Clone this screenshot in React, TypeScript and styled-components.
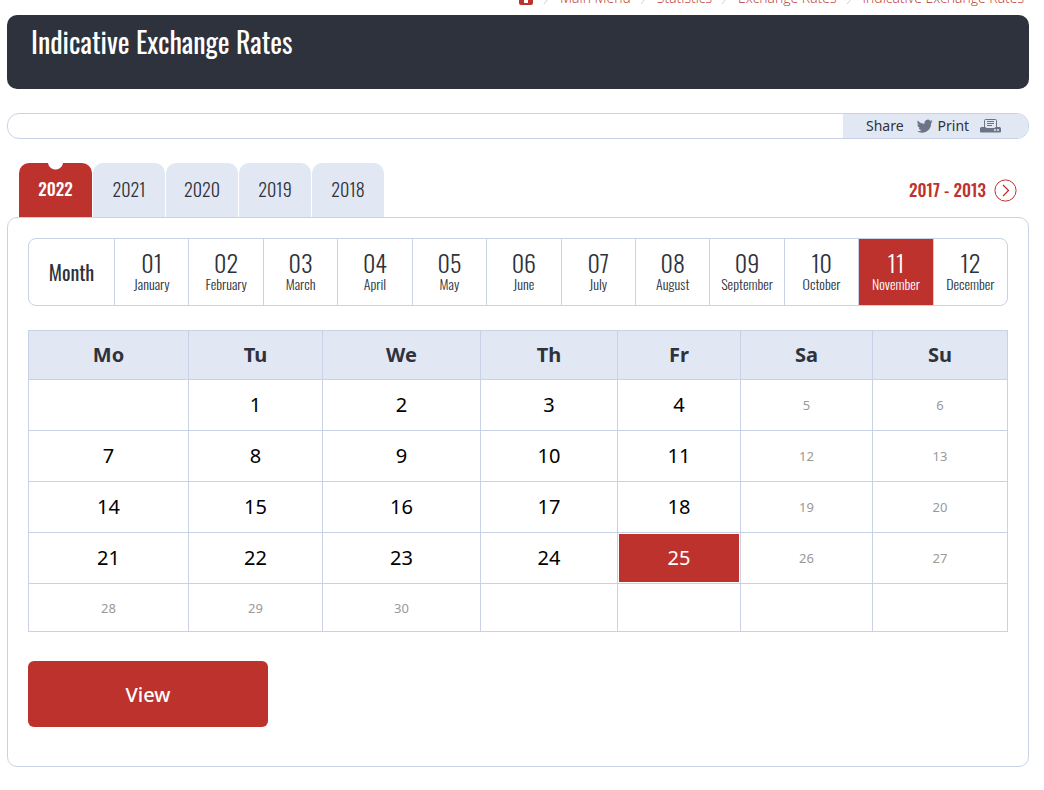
import React, { useState } from "react";
import styled, { createGlobalStyle, css } from "styled-components";

const red = "#be322e";
const ink = "#2e323c";
const line = "#c9d1e4";
const pale = "#e2e8f3";
const body = `"Noto Sans", "Open Sans", sans-serif`;
const light = `"Open Sans", "Noto Sans", sans-serif`;
const narrow = `Oswald, "Liberation Sans Narrow", "Arial Narrow", "Liberation Sans", sans-serif`;

const GlobalStyle = createGlobalStyle`
  *, *::before, *::after { box-sizing: border-box; }
  body { margin: 0; background: #fff; color: ${ink}; font-family: ${body}; }
  button { margin: 0; padding: 0; border: 0; background: none; color: inherit; font: inherit; cursor: pointer; }
  a { text-decoration: none; color: inherit; }
`;

const Page = styled.main`
  padding: 0 15px 20px 7px;
`;

const Breadcrumbs = styled.nav`
  display: flex;
  justify-content: flex-end;
  align-items: flex-end;
  gap: 9px;
  height: 15px;
  padding: 0 5px 7px 0;
  overflow: hidden;
  color: ${red};
  font-family: ${light};
  font-size: 14px;
  font-weight: 300;
  line-height: 20px;
  white-space: nowrap;
`;

const HomeLink = styled.a`
  display: flex;
  padding-bottom: 3px;
`;

const Divider = styled.span`
  display: flex;
  padding-bottom: 4px;
`;

const Banner = styled.header`
  height: 74px;
  padding: 9px 24px;
  border-radius: 10px;
  background: ${ink};
`;

const Title = styled.h1`
  margin: 0;
  color: #fff;
  font: 400 28px/36px ${narrow};
`;

const ShareBar = styled.div`
  display: flex;
  justify-content: flex-end;
  height: 26px;
  margin-top: 24px;
  border: 1px solid ${line};
  border-radius: 12px;
  overflow: hidden;
`;

const ShareActions = styled.div`
  display: flex;
  align-items: center;
  width: 185px;
  padding-left: 23px;
  background: ${pale};
  font-size: 14px;
  line-height: 24px;
`;

const IconLink = styled.a`
  display: flex;
  margin: 0 5px 0 13px;
`;

const PrintButton = styled.button`
  display: flex;
  align-items: center;
  gap: 11px;
`;

const YearBar = styled.div`
  display: flex;
  justify-content: space-between;
  align-items: center;
  height: 54px;
  margin-top: 24px;
  padding: 0 12px;
`;

const Tabs = styled.div`
  display: flex;
  gap: 1px;
`;

const YearTab = styled.button<{ $active: boolean }>`
  width: 72px;
  height: 54px;
  padding-bottom: 2px;
  border-radius: 10px 10px 0 0;
  background: ${pale};
  color: ${ink};
  font: 300 18px/24px ${narrow};
  ${(p) =>
    p.$active &&
    css`
      width: 73px;
      background: radial-gradient(circle at 50% -1px, #fff 7px, ${red} 8px);
      color: #fff;
      font-size: 17px;
      font-weight: 500;
    `}
`;

const OlderYears = styled.a`
  display: flex;
  align-items: center;
  gap: 8px;
  color: ${red};
  font: 500 17px/24px ${narrow};
`;

const Panel = styled.section`
  padding: 20px 20px 39px;
  border: 1px solid ${line};
  border-radius: 10px;
`;

const Months = styled.div`
  display: flex;
  height: 68px;
  border: 1px solid ${line};
  border-radius: 8px;
  overflow: hidden;
`;

const MonthLabel = styled.div`
  width: 85px;
  font: 400 20px/66px ${narrow};
  text-align: center;
`;

const MonthButton = styled.button<{ $active: boolean }>`
  display: flex;
  flex: 1 1 0;
  flex-direction: column;
  align-items: center;
  min-width: 0;
  padding-top: 9px;
  border-left: 1px solid ${line};
  background: ${(p) => (p.$active ? red : "transparent")};
  color: ${(p) => (p.$active ? "#fff" : ink)};
  font-family: ${narrow};
  font-weight: 300;
`;

const MonthNumber = styled.span`
  font-size: 24px;
  line-height: 28px;
`;

const MonthName = styled.span`
  font-size: 14px;
  line-height: 16px;
`;

const Calendar = styled.table`
  width: 100%;
  margin-top: 24px;
  border-collapse: collapse;
  table-layout: fixed;
`;

const DayHead = styled.th`
  height: 49px;
  padding: 0;
  border: 1px solid ${line};
  background: ${pale};
  font-size: 20px;
  font-weight: 700;
  line-height: 28px;
`;

const DayCell = styled.td`
  height: 48px;
  padding: 1px;
  border: 1px solid ${line};
  color: #999;
  font-size: 13px;
  line-height: 18px;
  text-align: center;
`;

const DayButton = styled.button<{ $active: boolean }>`
  display: block;
  width: 100%;
  height: 48px;
  background: ${(p) => (p.$active ? red : "transparent")};
  color: ${(p) => (p.$active ? "#fff" : "#000")};
  font-size: 20px;
  line-height: 48px;
`;

const ViewButton = styled.button`
  display: block;
  width: 240px;
  height: 66px;
  margin-top: 29px;
  border-radius: 6px;
  background: ${red};
  color: #fff;
  font-size: 20px;
  font-weight: 500;
  line-height: 68px;
`;

const HomeIcon = () => (
  <svg width="16" height="16" viewBox="0 0 16 16" fill={red} aria-hidden="true">
    <path d="M8 0 0 7h1v7a2 2 0 0 0 2 2h10a2 2 0 0 0 2-2V7h1z" />
    <path d="M6 11h4v3H6z" fill="#fff" />
  </svg>
);

const Chevron = () => (
  <svg width="8" height="12" viewBox="0 0 8 12" fill="none" stroke={line} aria-hidden="true">
    <path d="M1 1l5 5-5 6" />
  </svg>
);

const BirdIcon = () => (
  <svg width="16" height="16" viewBox="0 0 24 24" fill="#6c7588" aria-hidden="true">
    <path d="M23.6 4.9a9.7 9.7 0 0 1-2.8.8 4.9 4.9 0 0 0 2.1-2.7 9.7 9.7 0 0 1-3.1 1.2 4.9 4.9 0 0 0-8.4 4.5A13.9 13.9 0 0 1 1.3 3.6a4.9 4.9 0 0 0 1.5 6.5 4.9 4.9 0 0 1-2.2-.6 4.9 4.9 0 0 0 3.9 4.9 4.9 4.9 0 0 1-2.2.1 4.9 4.9 0 0 0 4.6 3.4A9.9 9.9 0 0 1 0 19.9a13.9 13.9 0 0 0 21.2-12.4 10 10 0 0 0 2.4-2.6z" />
  </svg>
);

const PrinterIcon = () => (
  <svg width="21" height="14" viewBox="0 0 21 14" aria-hidden="true">
    <path d="M4.5 8V1.5a1 1 0 0 1 1-1h10a1 1 0 0 1 1 1V8" fill="none" stroke="#6c7588" />
    <path d="M7 2.500h7M7 4.500h7M7 6.500h5" stroke="#6c7588" fill="none" />
    <path d="M1.5 8h4l1 1h8l1-1h4A1.5 1.5 0 0 1 21 9.500v3a1 1 0 0 1-1 1H1a1 1 0 0 1-1-1v-3A1.5 1.5 0 0 1 1.5 8z" fill="#6c7588" />
    <circle cx="15" cy="11" r="1" fill={pale} />
    <circle cx="18" cy="11" r="1" fill={pale} />
  </svg>
);

const CircleArrow = () => (
  <svg width="23" height="23" viewBox="0 0 23 23" fill="none" stroke={red} aria-hidden="true">
    <circle cx="11.5" cy="11.5" r="10.6" />
    <path d="m9 6 5.5 5.500L9 17" strokeWidth="1.3" />
  </svg>
);

const crumbs = ["Main Menu", "Statistics", "Exchange Rates", "Indicative Exchange Rates"];
const years = [2022, 2021, 2020, 2019, 2018];
const months = [
  "January", "February", "March", "April", "May", "June",
  "July", "August", "September", "October", "November", "December",
];
const weekdays = [
  { name: "Mo", width: 160 },
  { name: "Tu", width: 134 },
  { name: "We", width: 158 },
  { name: "Th", width: 137 },
  { name: "Fr", width: 123 },
  { name: "Sa", width: 132 },
  { name: "Su", width: 135 },
];
const weeks = [0, 1, 2, 3, 4].map((w) =>
  weekdays.map((_, d) => {
    const n = w * 7 + d;
    return n >= 1 && n <= 30 ? n : null;
  })
);

export default function App() {
  const [year, setYear] = useState(2022);
  const [month, setMonth] = useState(10);
  const [day, setDay] = useState(25);

  return (
    <>
      <GlobalStyle />
      <Page>
        <Breadcrumbs aria-label="Breadcrumb">
          <HomeLink href="#" aria-label="Home">
            <HomeIcon />
          </HomeLink>
          {crumbs.map((c) => (
            <React.Fragment key={c}>
              <Divider>
                <Chevron />
              </Divider>
              <a href="#">{c}</a>
            </React.Fragment>
          ))}
        </Breadcrumbs>
        <Banner>
          <Title>Indicative Exchange Rates</Title>
        </Banner>
        <ShareBar>
          <ShareActions>
            <span>Share</span>
            <IconLink href="#" aria-label="Twitter">
              <BirdIcon />
            </IconLink>
            <PrintButton type="button">
              Print
              <PrinterIcon />
            </PrintButton>
          </ShareActions>
        </ShareBar>
        <YearBar>
          <Tabs>
            {years.map((y) => (
              <YearTab key={y} type="button" $active={y === year} onClick={() => setYear(y)}>
                {y}
              </YearTab>
            ))}
          </Tabs>
          <OlderYears href="#">
            2017 - 2013
            <CircleArrow />
          </OlderYears>
        </YearBar>
        <Panel>
          <Months>
            <MonthLabel>Month</MonthLabel>
            {months.map((m, i) => (
              <MonthButton key={m} type="button" $active={i === month} onClick={() => setMonth(i)}>
                <MonthNumber>{String(i + 1).padStart(2, "0")}</MonthNumber>
                <MonthName>{m}</MonthName>
              </MonthButton>
            ))}
          </Months>
          <Calendar>
            <colgroup>
              {weekdays.map((d) => (
                <col key={d.name} width={d.width} />
              ))}
            </colgroup>
            <thead>
              <tr>
                {weekdays.map((d) => (
                  <DayHead key={d.name} scope="col">{d.name}</DayHead>
                ))}
              </tr>
            </thead>
            <tbody>
              {weeks.map((week, w) => (
                <tr key={w}>
                  {week.map((n, d) => (
                    <DayCell key={d}>
                      {n !== null && d < 5 && n <= 25 ? (
                        <DayButton type="button" $active={n === day} onClick={() => setDay(n)}>
                          {n}
                        </DayButton>
                      ) : (
                        n
                      )}
                    </DayCell>
                  ))}
                </tr>
              ))}
            </tbody>
          </Calendar>
          <ViewButton type="button">View</ViewButton>
        </Panel>
      </Page>
    </>
  );
}
